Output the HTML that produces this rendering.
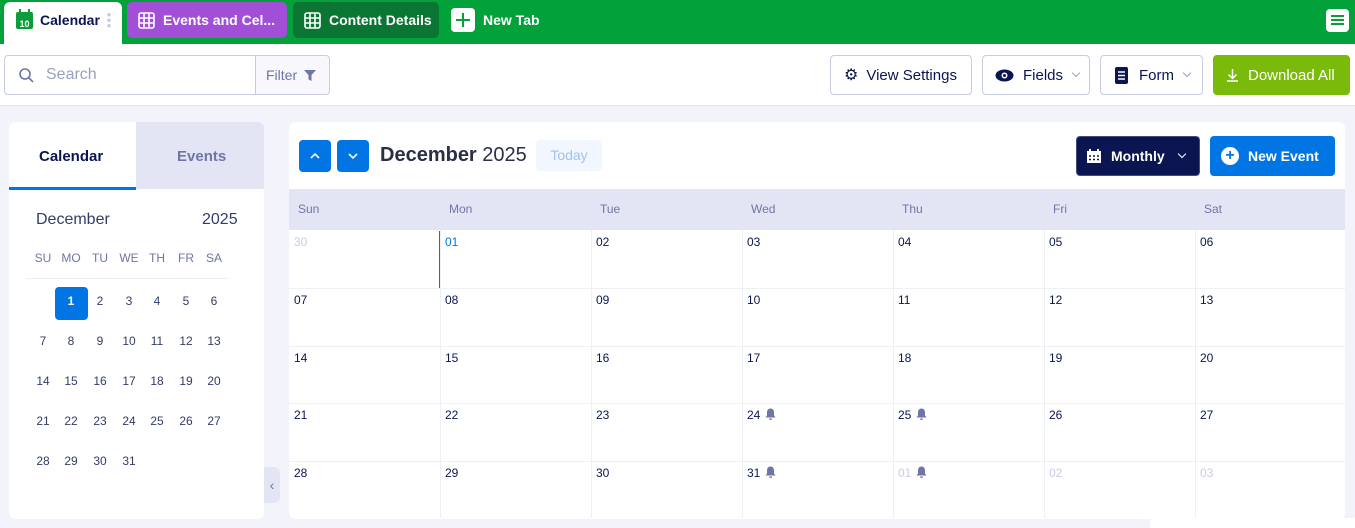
<!DOCTYPE html>
<html><head><meta charset="utf-8"><style>
*{box-sizing:border-box;margin:0;padding:0}
body{width:1355px;height:528px;overflow:hidden;background:#f3f3fc;font-family:"Liberation Sans",sans-serif;position:relative;color:#0a1551}
.abs{position:absolute}
.top{left:0;top:0;width:1355px;height:44px;background:#02a139}
.tab{position:absolute;top:2px;height:36px;border-radius:5px;display:flex;align-items:center;font-weight:bold;font-size:14px;color:#fff}
.btn{position:absolute;top:55px;height:40px;border:1px solid #c8cce0;border-radius:4px;background:#fff;display:flex;align-items:center;font-size:15px;color:#0a1551}
.panel{background:#fff;border-radius:6px}
.dn{position:absolute;font-size:12px;color:#343c6a;width:28px;text-align:center}
.hd{position:absolute;top:202px;font-size:12px;color:#6f76a7}
.cell{position:absolute;font-size:12px;color:#0a1551}
.chev{display:inline-block;width:7px;height:7px;border-right:1.5px solid currentColor;border-bottom:1.5px solid currentColor;transform:rotate(45deg)}
</style></head><body>
<div class="abs top"></div>
<div class="abs" style="left:4px;top:2px;width:118px;height:42px;background:#fff;border-radius:6px 6px 0 0"></div>
<svg class="abs" style="left:15px;top:9px" width="19" height="21" viewBox="0 0 19 21"><rect x="1" y="3" width="17" height="17" rx="2" fill="#0a9d3a"/><rect x="4" y="0" width="2" height="5" fill="#0a9d3a"/><rect x="13" y="0" width="2" height="5" fill="#0a9d3a"/><text x="9.5" y="18" font-size="9" font-weight="bold" fill="#fff" text-anchor="middle" font-family="Liberation Sans">10</text></svg>
<div class="abs" style="left:40px;top:12px;font-size:14px;font-weight:bold;color:#0a1551">Calendar</div>
<div class="abs" style="left:107px;top:12px;width:4px;height:16px;background:radial-gradient(circle,#c8cce0 1.6px,transparent 2px) 0 0/4px 5.5px"></div>
<div class="tab" style="left:127px;width:160px;background:#a14fd6"><svg style="margin:0 8px 0 11px" width="17" height="17" viewBox="0 0 17 17" fill="none" stroke="#fff" stroke-width="1.6"><rect x="1" y="1" width="15" height="15" rx="2"/><path d="M6 1v15M11 1v15M1 6h15M1 11h15"/></svg>Events and Cel...</div>
<div class="tab" style="left:293px;width:146px;background:#0b7633"><svg style="margin:0 8px 0 11px" width="17" height="17" viewBox="0 0 17 17" fill="none" stroke="#fff" stroke-width="1.6"><rect x="1" y="1" width="15" height="15" rx="2"/><path d="M6 1v15M11 1v15M1 6h15M1 11h15"/></svg>Content Details</div>
<div class="abs" style="left:451px;top:8px;width:24px;height:24px;background:#fff;border-radius:4px"><div class="abs" style="left:11px;top:5px;width:2px;height:14px;background:#0a9d3a"></div><div class="abs" style="left:5px;top:11px;width:14px;height:2px;background:#0a9d3a"></div></div>
<div class="abs" style="left:483px;top:12px;font-size:14px;font-weight:bold;color:#fff">New Tab</div>
<div class="abs" style="left:1326px;top:9px;width:23px;height:23px;background:#fff;border-radius:4px"><div class="abs" style="left:5px;top:6px;width:13px;height:2px;background:#0a9d3a;box-shadow:0 4px #0a9d3a,0 8px #0a9d3a"></div></div>
<div class="abs" style="left:0;top:44px;width:1355px;height:62px;background:#fff;border-bottom:1px solid #dfe1ee"></div>
<div class="btn" style="left:4px;width:326px;background:#fff;font-size:16px"><svg style="margin:0 12px 0 14px" width="15" height="15" viewBox="0 0 15 15" fill="none" stroke="#6f76a7" stroke-width="1.6"><circle cx="6" cy="6" r="5"/><path d="M10 10l4 4"/></svg><span style="color:#9ca0bd">Search</span>
<div class="abs" style="left:250px;top:0;width:74px;height:38px;border-left:1px solid #c8cce0;background:#f8f8fc;border-radius:0 4px 4px 0;font-size:14px;color:#6f76a7;padding:11px 0 0 10px">Filter <svg width="12" height="11" style="margin-left:3px;vertical-align:-1px"><path d="M0 0h12L7.5 5v6L4.5 9.5V5z" fill="#6f76a7"/></svg></div></div>
<div class="btn" style="left:830px;width:142px;padding-left:13px"><span style="font-size:16px;margin-right:8px">⚙</span>View Settings</div>
<div class="btn" style="left:982px;width:108px;padding-left:12px"><svg width="19" height="13" viewBox="0 0 19 13" style="margin-right:9px"><ellipse cx="9.5" cy="6.5" rx="9" ry="6" fill="#0a1551"/><circle cx="9.5" cy="6.5" r="3" fill="#fff"/><circle cx="9.5" cy="6.5" r="1.5" fill="#0a1551"/></svg>Fields <span class="chev" style="color:#9ca0bd;margin:0 0 4px 10px;width:6px;height:6px"></span></div>
<div class="btn" style="left:1100px;width:103px;padding-left:14px"><svg width="13" height="17" style="margin-right:11px"><rect width="13" height="17" rx="2" fill="#0a1551"/><path d="M3 5h7M3 8.5h7M3 12h7" stroke="#fff" stroke-width="1.5"/></svg>Form <span class="chev" style="color:#9ca0bd;margin:0 0 4px 10px;width:6px;height:6px"></span></div>
<div class="btn" style="left:1213px;width:137px;background:#7aba0a;border-color:#7aba0a;color:#fff;padding-left:12px"><svg width="13" height="14" style="margin-right:9px" fill="none" stroke="#fff" stroke-width="1.5"><path d="M6.5 1v9M2.5 6.5l4 4 4-4M1 13h11"/></svg>Download All</div>
<div class="abs panel" style="left:9px;top:122px;width:255px;height:397px;overflow:hidden">
<div class="abs" style="left:127px;top:0;width:128px;height:67px;background:#e3e5f4"></div>
<div class="abs" style="left:0;top:65px;width:127px;height:3px;background:#0075e3"></div>
<div class="abs" style="left:30px;top:26px;font-size:15px;font-weight:bold">Calendar</div>
<div class="abs" style="left:168px;top:26px;font-size:15px;font-weight:bold;color:#6f76a7">Events</div>
<div class="abs" style="left:27px;top:89px;font-size:16px;color:#343c6a">December</div>
<div class="abs" style="left:193px;top:89px;font-size:16px;color:#343c6a">2025</div>
<div class="abs" style="left:17px;top:156px;width:203px;height:1px;background:#eceef6"></div>
<div class="abs" style="left:46px;top:165px;width:33px;height:33px;background:#0075e3;border-radius:4px"></div>
</div>
<div class="abs" style="left:264px;top:467px;width:16px;height:36px;background:#e3e5f4;border-radius:0 6px 6px 0;color:#6f76a7;font-size:14px;text-align:center;line-height:36px">‹</div>
<div class="abs panel" style="left:289px;top:122px;width:1056px;height:397px;overflow:hidden">
<svg class="abs" style="left:10px;top:18px" width="32" height="32"><rect width="32" height="32" rx="4" fill="#0075e3"/><path d="M12 18l4-4 4 4" fill="none" stroke="#fff" stroke-width="1.6"/></svg>
<svg class="abs" style="left:48px;top:18px" width="32" height="32"><rect width="32" height="32" rx="4" fill="#0075e3"/><path d="M12 14l4 4 4-4" fill="none" stroke="#fff" stroke-width="1.6"/></svg>
<div class="abs" style="left:91px;top:22px;font-size:20px;font-weight:bold;color:#2b2f45">December <span style="font-weight:normal">2025</span></div>
<div class="abs" style="left:247px;top:18px;width:66px;height:31px;background:#f1f6ff;border-radius:4px;color:#9ec3f2;font-size:14px;text-align:center;line-height:31px">Today</div>
<div class="abs" style="left:787px;top:14px;width:124px;height:40px;background:#0a1551;border:1px solid #444d7a;border-radius:4px;color:#fff;font-weight:bold;font-size:14px;line-height:38px;padding-left:34px">Monthly <span class="chev abs" style="right:14px;top:14px;width:6px;height:6px"></span><svg class="abs" style="left:10px;top:12px" width="14" height="14"><rect y="2" width="14" height="12" fill="#fff"/><rect x="2" y="0" width="2" height="3" fill="#fff"/><rect x="10" y="0" width="2" height="3" fill="#fff"/><path d="M2 7h2M6 7h2M10 7h2M2 10.5h2M6 10.5h2M10 10.5h2" stroke="#0a1551" stroke-width="1.6"/></svg></div>
<div class="abs" style="left:921px;top:14px;width:125px;height:40px;background:#0075e3;border-radius:4px;color:#fff;font-weight:bold;font-size:14px;line-height:40px;padding-left:38px"><span class="abs" style="left:11px;top:11px;width:18px;height:18px;border-radius:50%;background:#fff;color:#0075e3;line-height:18px;text-align:center;font-size:16px">+</span>New Event</div>
<div class="abs" style="left:0;top:67px;width:1056px;height:41px;background:#e3e5f4"></div>
</div>
<div id="grid"></div>
<div class="abs" style="left:1150px;top:518px;width:205px;height:10px;background:#fff;border-radius:4px 0 0 0"></div>
<script>
var h='';
var mx=[43,71,100,129,157,186,214];
['SU','MO','TU','WE','TH','FR','SA'].forEach(function(d,i){h+='<div class="dn" style="left:'+(mx[i]-14)+'px;top:251px;color:#6f76a7">'+d+'</div>'});
var rows=[294,334,374,414,454];var n=1;
for(var r=0;r<5;r++)for(var c=0;c<7;c++){if(r==0&&c==0)continue;if(n>31)break;h+='<div class="dn" style="left:'+(mx[c]-14)+'px;top:'+rows[r]+'px;'+(n==1?'color:#fff;font-weight:bold':'')+'">'+n+'</div>';n++;}
var cx=[289,440,591,742,893,1044,1195];
['Sun','Mon','Tue','Wed','Thu','Fri','Sat'].forEach(function(d,i){h+='<div class="hd" style="left:'+(cx[i]+9)+'px">'+d+'</div>'});
var ry=[230,288,346,403,461,518];
for(var i=1;i<7;i++)h+='<div class="abs" style="left:'+cx[i]+'px;top:230px;width:1px;height:288px;background:#eef0f6"></div>';
for(var i=1;i<5;i++)h+='<div class="abs" style="left:289px;top:'+ry[i]+'px;width:1056px;height:1px;background:#eef0f6"></div>';
h+='<div class="abs" style="left:439px;top:231px;width:1px;height:57px;background:#0075e3"></div>';
var bell='<svg width="11" height="12" style="margin-left:5px;vertical-align:-1px" viewBox="0 0 11 12"><path d="M5.5 0.5c-2.2 0-3.5 1.7-3.5 4v3L0.5 9.5h10L9 7.5v-3c0-2.3-1.3-4-3.5-4zM4 10.5h3a1.5 1.5 0 0 1-3 0z" fill="#6f76a7"/></svg>';
for(var r=0;r<5;r++)for(var c=0;c<7;c++){var t,col='#0a1551',b='';
if(r==0&&c==0){t='30';col='#c8cce8'}else{var k=r*7+c;t=k<=31?k:(k-31);if(k>31)col='#c8cce8';if(k==1)col='#0075e3';if(k==24||k==25||k==31||k==32)b=bell;t=(t<10?'0':'')+t;}
h+='<div class="cell" style="left:'+(cx[c]+5)+'px;top:'+(ry[r]+5)+'px;color:'+col+'">'+t+b+'</div>';}
h+='<div class="abs" style="left:1345px;top:230px;width:10px;height:266px;background:#f3f3fc"></div>';
document.getElementById('grid').innerHTML=h;
</script>
</body></html>
